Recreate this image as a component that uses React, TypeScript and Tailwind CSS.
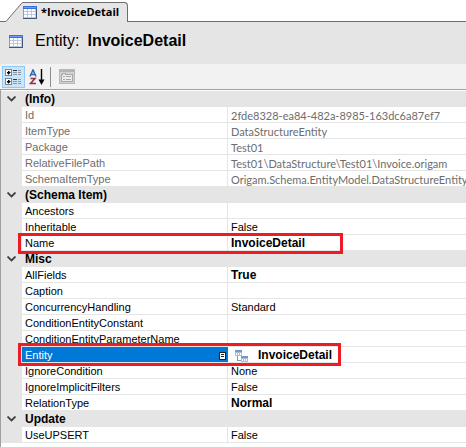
import { useState, type ReactNode } from "react";

type Property = {
  name: string;
  value: string;
  bold?: boolean;
  readOnly?: boolean;
  marked?: boolean;
  selected?: boolean;
};

type Category = { title: string; properties: Property[] };

const categories: Category[] = [
  {
    title: "(Info)",
    properties: [
      { name: "Id", value: "2fde8328-ea84-482a-8985-163dc6a87ef7", readOnly: true },
      { name: "ItemType", value: "DataStructureEntity", readOnly: true },
      { name: "Package", value: "Test01", readOnly: true },
      { name: "RelativeFilePath", value: "Test01\\DataStructure\\Test01\\Invoice.origam", readOnly: true },
      { name: "SchemaItemType", value: "Origam.Schema.EntityModel.DataStructureEntity", readOnly: true },
    ],
  },
  {
    title: "(Schema Item)",
    properties: [
      { name: "Ancestors", value: "" },
      { name: "Inheritable", value: "False" },
      { name: "Name", value: "InvoiceDetail", bold: true, marked: true },
    ],
  },
  {
    title: "Misc",
    properties: [
      { name: "AllFields", value: "True", bold: true },
      { name: "Caption", value: "" },
      { name: "ConcurrencyHandling", value: "Standard" },
      { name: "ConditionEntityConstant", value: "" },
      { name: "ConditionEntityParameterName", value: "" },
      { name: "Entity", value: "InvoiceDetail", bold: true, marked: true, selected: true },
      { name: "IgnoreCondition", value: "None" },
      { name: "IgnoreImplicitFilters", value: "False" },
      { name: "RelationType", value: "Normal", bold: true },
    ],
  },
  { title: "Update", properties: [{ name: "UseUPSERT", value: "False" }] },
];

function TableIcon() {
  return (
    <svg width="14" height="13" viewBox="0 0 14 13" className="shrink-0" aria-hidden="true" shapeRendering="crispEdges">
      <rect width="14" height="13" fill="#8e9cc0" />
      <rect width="14" height="3" fill="#3d70dc" />
      <rect x="1" y="1" width="12" height="1" fill="#6d9cf5" />
      <rect x="1" y="3" width="12" height="9" fill="#bcc8e0" />
      {[3, 6, 9].map((y) =>
        [1, 5, 9].map((x) => <rect key={`${x}-${y}`} x={x} y={y} width="3" height="2" fill="#ffffff" />),
      )}
      <rect x="13" y="3" width="1" height="10" fill="#45557f" />
      <rect y="12" width="14" height="1" fill="#45557f" />
    </svg>
  );
}

function CategorizedIcon() {
  return (
    <svg width="17" height="16" viewBox="0 0 17 16" aria-hidden="true" shapeRendering="crispEdges">
      {[0, 9].map((y) => (
        <g key={y}>
          <rect x="0.5" y={y + 0.5} width="6" height="6" fill="#ffffff" stroke="#70879c" />
          <path d={`M2 ${y + 3}h3v1h-3zM3 ${y + 2}h1v3h-1z`} fill="#000000" stroke="#000000" strokeWidth="0.5" />
          <path d={`M8 ${y + 1}h4v1h-4z`} fill="#30363c" />
          <path
            d={`M8 ${y + 3}h4v1h-4zM8 ${y + 5}h4v1h-4zM13 ${y + 1}h3v1h-3zM13 ${y + 3}h3v1h-3zM13 ${y + 5}h3v1h-3z`}
            fill="#8798ac"
          />
        </g>
      ))}
    </svg>
  );
}

function SortIcon() {
  return (
    <svg width="16" height="16" viewBox="0 0 16 16" aria-hidden="true" fill="none">
      <path d="M1 7.5L4 1L7 7.5M2 5.5H6" stroke="#2f6ab0" strokeWidth="1.6" />
      <path d="M1.5 9.5H6L1.5 14.5H7" stroke="#983040" strokeWidth="1.6" />
      <path d="M12.5 0V13" stroke="#000000" strokeWidth="1.4" />
      <path d="M9.5 10.5H15.5L12.5 16Z" fill="#000000" />
    </svg>
  );
}

function PagesIcon() {
  return (
    <svg width="16" height="16" viewBox="0 0 16 16" aria-hidden="true" fill="none" shapeRendering="crispEdges">
      <rect x="0.5" y="0.5" width="15" height="14" fill="#d2d2d2" stroke="#b8b8b8" />
      <path d="M0 1.5H16" stroke="#b4b4b4" strokeWidth="2" />
      <path d="M2.5 5.5H3.5V4.5H6.5V5.5H13.5V12.5H2.5Z" fill="#ececec" stroke="#a8a8a8" />
      <path d="M4 7.5H6M7 7.5H12M4 10.5H6M7 10.5H12" stroke="#a8a8a8" />
    </svg>
  );
}

function EntityIcon() {
  return (
    <svg width="13" height="12" viewBox="0 0 13 12" className="shrink-0" aria-hidden="true" shapeRendering="crispEdges">
      <rect width="7" height="6" fill="#a9bde0" />
      <rect width="7" height="2" fill="#7296d6" />
      <path d="M1 3h1v2h-1zM3 3h1v2h-1zM5 3h1v2h-1z" fill="#ffffff" />
      <path d="M2 6h1v4h3v1h-4z" fill="#8b98ad" />
      <rect x="6" y="6" width="7" height="6" fill="#a9bde0" />
      <rect x="6" y="6" width="7" height="2" fill="#7296d6" />
      <path d="M7 9h1v2h-1zM9 9h1v2h-1zM11 9h1v2h-1z" fill="#ffffff" />
    </svg>
  );
}

function Cell({ children, className }: { children: ReactNode; className: string }) {
  return (
    <td className={`h-4 border-b border-[#e5e5e5] p-0 pl-[3px] leading-[13px] whitespace-nowrap ${className}`}>
      {children}
    </td>
  );
}

function valueStyle({ bold, readOnly }: Property) {
  if (bold) return "text-[12px] font-bold";
  return readOnly ? "font-[Lato,sans-serif] text-[11px]" : "text-[11px]";
}

function PropertyRow({ property }: { property: Property }) {
  const { name, value, readOnly, marked, selected } = property;
  return (
    <tr className={`relative ${readOnly ? "text-[#6d6d6d]" : "text-black"}`}>
      <td className="bg-[#e5e5e5] p-0">
        {marked && (
          <span
            className={`pointer-events-none absolute left-[17px] z-10 border-3 border-[#ed1c24] ${
              selected ? "-top-1 h-[23px] w-[323px]" : "-top-0.5 h-[21px] w-[325px]"
            }`}
          />
        )}
      </td>
      <th
        scope="row"
        className={`h-4 border-b border-[#e5e5e5] p-0 pl-[3px] text-left text-[11px] leading-[13px] font-normal whitespace-nowrap ${
          selected ? "bg-[#0078d7] text-white" : "border-r"
        }`}
      >
        <span className="flex h-[15px] items-center justify-between pt-0.5 pr-0.5">
          {name}
          {selected && (
            <svg width="7" height="8" viewBox="0 0 7 8" aria-hidden="true" shapeRendering="crispEdges">
              <rect width="7" height="8" fill="#222222" />
              <rect x="1" y="1" width="5" height="6" fill="#ffffff" />
              <path d="M2 2h3v1h-3zM2 4h3v1h-3z" fill="#222222" />
            </svg>
          )}
        </span>
      </th>
      <Cell className={valueStyle(property)}>
        <span className="flex h-[15px] items-center pt-0.5">
          {selected && (
            <span className="mr-2.5 ml-1 flex">
              <EntityIcon />
            </span>
          )}
          {value}
        </span>
      </Cell>
    </tr>
  );
}

function CategoryRows({ category }: { category: Category }) {
  const [open, setOpen] = useState(true);
  return (
    <tbody>
      <tr className="bg-[#e5e5e5]">
        <td className="h-4 p-0">
          <button
            type="button"
            aria-label={category.title}
            aria-expanded={open}
            onClick={() => setOpen(!open)}
            className="flex h-4 w-full items-center justify-center"
          >
            <svg width="9" height="6" viewBox="0 0 9 6" fill="none" aria-hidden="true" className={open ? "" : "-rotate-90"}>
              <path d="M0.5 0.5L4.5 4.5L8.5 0.5" stroke="#404040" strokeWidth="1.8" />
            </svg>
          </button>
        </td>
        <th colSpan={2} scope="rowgroup" className="h-4 p-0 pl-[3px] text-left text-xs leading-4 font-bold text-black">
          {category.title}
        </th>
      </tr>
      {open && category.properties.map((p) => <PropertyRow key={p.name} property={p} />)}
    </tbody>
  );
}

export default function App() {
  return (
    <main className="flex min-h-screen flex-col bg-white font-['Liberation_Sans',Arial,sans-serif] text-black">
      <div role="tablist" className="flex h-[22px] items-end bg-white">
        <div className="h-px w-1.5 bg-[#6d6d6d]" />
        <svg width="17" height="20" viewBox="0 0 17 20" aria-hidden="true">
          <path d="M0 20V19.5L15 2Q16 0.5 17 0.5V20Z" fill="#e5e5e5" />
          <path d="M0 19.5L15 2Q16 0.5 17 0.5" fill="none" stroke="#6d6d6d" />
        </svg>
        <button
          type="button"
          role="tab"
          aria-selected="true"
          className="flex h-5 w-[105px] items-center gap-1 rounded-tr-sm border-t border-r border-[#6d6d6d] bg-[#e5e5e5] font-['Open_Sans',sans-serif] text-[11px] font-bold whitespace-nowrap"
        >
          <TableIcon />
          *InvoiceDetail
        </button>
        <div className="h-px flex-1 bg-[#6d6d6d]" />
      </div>

      <header className="flex h-[42px] items-center gap-3 bg-[#e5e5e5] pb-1 pl-[9px]">
        <TableIcon />
        <h1 className="flex gap-2 text-base">
          <span>Entity:</span>
          <strong>InvoiceDetail</strong>
        </h1>
      </header>

      <div role="toolbar" aria-label="Property grid" className="flex h-[25px] items-center bg-[#f2f2f2] pl-0.5">
        <button
          type="button"
          aria-label="Categorized"
          className="flex h-[22px] w-[23px] items-center justify-center border border-[#90c8f6] bg-[#cce4f7]"
        >
          <CategorizedIcon />
        </button>
        <button type="button" aria-label="Alphabetical" className="flex h-[22px] w-[23px] items-center justify-center">
          <SortIcon />
        </button>
        <div className="mx-[2px] h-5 w-px bg-[#8c8c8c]" />
        <button type="button" disabled aria-label="Property pages" className="flex h-[22px] w-7 items-center justify-center">
          <PagesIcon />
        </button>
      </div>

      <section className="flex-1 border-t border-l border-[#a0a0a0]">
        <table className="mt-px w-full table-fixed border-separate border-spacing-0">
          <colgroup>
            <col className="w-[21px]" />
            <col className="w-[206px]" />
            <col />
          </colgroup>
          {categories.map((c) => (
            <CategoryRows key={c.title} category={c} />
          ))}
        </table>
      </section>
    </main>
  );
}
